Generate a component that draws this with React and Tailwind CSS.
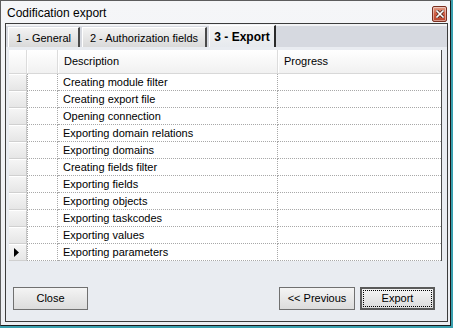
import React from "react";

const steps = [
  "Creating module filter",
  "Creating export file",
  "Opening connection",
  "Exporting domain relations",
  "Exporting domains",
  "Creating fields filter",
  "Exporting fields",
  "Exporting objects",
  "Exporting taskcodes",
  "Exporting values",
  "Exporting parameters",
];

function WinButton({ children, isDefault, className = "" }) {
  return (
    <div
      className={`h-[23px] flex items-center justify-center bg-gradient-to-b from-[#f4f4f4] to-[#dcdcdc] ${
        isDefault ? "border-2 border-[#5a5a5a] p-[1px]" : "border border-[#707070]"
      } ${className}`}
    >
      {isDefault ? (
        <div className="w-full h-full border border-dotted border-black flex items-center justify-center">
          {children}
        </div>
      ) : (
        children
      )}
    </div>
  );
}

export default function App() {
  return (
    <div className="w-[453px] h-[329px] bg-white font-['Liberation_Sans',Arial,sans-serif] text-[11px] text-black leading-none">
      {/* Outer edge (desktop shows through) */}
      <div className="w-[453px] h-[328px] border-r-2 border-b-2 border-[#3a9fae]">
        {/* Window */}
        <div className="w-[451px] h-[326px] flex flex-col bg-gradient-to-b from-[#f5f6f8] to-[#eceef2] border border-[#5d5d5d] border-r-[#1a1a1a] border-b-[#1a1a1a]">
          {/* Title bar */}
          <div className="h-[22px] flex items-center justify-between pl-[6px] pr-[3px]">
            <span className="text-[12px] text-black mt-[1px]">Codification export</span>
            <div className="w-[15px] h-[16px] mt-[4px] rounded-[2px] border border-[#7a2f20] bg-gradient-to-b from-[#e2a08a] via-[#cc5a40] to-[#b8432c] flex items-center justify-center shadow-[inset_0_0_0_1px_rgba(255,255,255,0.45)]">
              <svg width="8" height="8" viewBox="0 0 8 8">
                <path d="M1 1 L7 7 M7 1 L1 7" stroke="#3a1a12" strokeWidth="3" strokeLinecap="square" />
                <path d="M1 1 L7 7 M7 1 L1 7" stroke="#ffffff" strokeWidth="1.6" strokeLinecap="square" />
              </svg>
            </div>
          </div>

          {/* Tab control */}
          <div className="ml-[4px] mr-[2px] mb-[3px] flex-1 flex flex-col border border-[#3c3c3c]">
            {/* Tab strip */}
            <div className="h-[23px] flex items-end pl-[2px] bg-[#d6d9e0] border-t-2 border-[#f2f3f5]">
              <div className="w-[72px] h-[20px] pt-[1px] flex items-center justify-center bg-gradient-to-b from-[#f3f3f3] to-[#d9d9d9] border-l border-t border-white border-r-2 border-r-[#4a4a4a]">
                1 - General
              </div>
              <div className="w-[125px] ml-[2px] h-[20px] pt-[1px] flex items-center justify-center bg-gradient-to-b from-[#f3f3f3] to-[#d9d9d9] border-l border-t border-white border-r-2 border-r-[#4a4a4a]">
                2 - Authorization fields
              </div>
              <div className="w-[67px] ml-[2px] h-[22px] flex items-center justify-center bg-gradient-to-b from-[#f4f4f4] to-[#e6e9ee] border-l border-t border-white border-r-2 border-r-[#2a2a2a] text-[12px] font-bold">
                3 - Export
              </div>
            </div>

            {/* Tab page */}
            <div className="flex-1 flex flex-col bg-[#e9ecf1] pt-[3px] pl-[3px]">
              {/* Grid */}
              <div className="w-[433px] border-r border-[#4a4a4a] flex flex-col">
                {/* Header */}
                <div className="h-[24px] flex bg-gradient-to-b from-[#ffffff] to-[#f1f1f1] border-b border-[#d8d8d8]">
                  <div className="w-[18px] border-r border-[#dcdcdc]" />
                  <div className="w-[31px] border-r border-[#dcdcdc] border-l border-l-white" />
                  <div className="w-[220px] pl-[5px] flex items-center border-r border-[#dcdcdc] border-l border-l-white">
                    Description
                  </div>
                  <div className="flex-1 pl-[5px] flex items-center border-l border-l-white">Progress</div>
                </div>
                {/* Rows */}
                {steps.map((s, i) => (
                  <div key={s} className="h-[17px] flex bg-white">
                    <div className="w-[18px] flex items-center justify-center bg-gradient-to-b from-[#f5f5f5] to-[#e6e6e6] border-t border-white border-b border-b-[#d0d0d0] border-r border-r-[#c8c8c8]">
                      {i === steps.length - 1 && (
                        <svg width="5" height="9" viewBox="0 0 5 9" className="ml-[-2px]">
                          <polygon points="0,0 5,4.5 0,9" fill="#000" />
                        </svg>
                      )}
                    </div>
                    <div className="w-[31px] border-l border-dotted border-[#a8a8a8] border-r border-b" />
                    <div className="w-[220px] pl-[5px] pt-[1px] flex items-center border-r border-b border-dotted border-[#a8a8a8]">
                      {s}
                    </div>
                    <div className="flex-1 border-b border-dotted border-[#a8a8a8]" />
                  </div>
                ))}
              </div>

              <div className="flex-1" />

              {/* Buttons */}
              <div className="flex items-center pl-[4px] pr-[12px] pb-[11px]">
                <WinButton className="w-[75px]">Close</WinButton>
                <div className="flex-1" />
                <WinButton className="w-[76px]">&lt;&lt; Previous</WinButton>
                <WinButton isDefault className="w-[75px] ml-[5px]">
                  Export
                </WinButton>
              </div>
            </div>
          </div>
        </div>
      </div>
    </div>
  );
}
